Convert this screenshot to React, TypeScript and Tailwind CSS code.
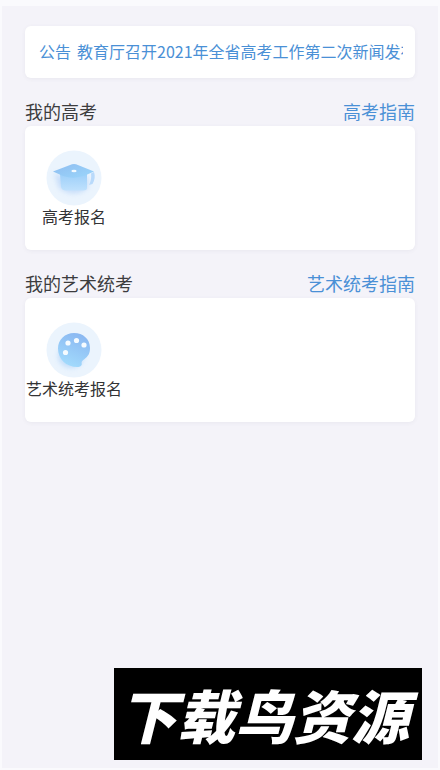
import type { ReactNode } from 'react';

function GraduationCapIcon() {
  return (
    <svg viewBox="0 0 56 56" className="h-14 w-14" aria-hidden="true">
      <defs>
        <linearGradient id="capTop" x1="0" y1="0" x2="1" y2="1">
          <stop offset="0" stopColor="#8fbdf0" />
          <stop offset="1" stopColor="#9bd6fb" />
        </linearGradient>
        <linearGradient id="capBase" x1="0" y1="0" x2="0" y2="1">
          <stop offset="0" stopColor="#9dcff9" />
          <stop offset="1" stopColor="#bfe1fd" />
        </linearGradient>
        <filter id="capBlur" x="-50%" y="-50%" width="200%" height="200%">
          <feGaussianBlur stdDeviation="2.5" />
        </filter>
      </defs>
      <circle cx="28" cy="28" r="27.5" fill="#ebf4fd" />
      <path d="M8 23 L28 30 L42 26 L42 38 Q28 49 13 38 Z" fill="#b0cff7" opacity="0.6" filter="url(#capBlur)" />
      <path d="M14 24 H41 V38 Q41 40.500 37 40.500 H20 Q16 40.500 15 37 Z" fill="url(#capBase)" />
      <path d="M7 21.500 L26 14.300 Q28 13.600 30 14.300 L48 21.500 L39 25.500 Q28 29.500 17 26 Z" fill="url(#capTop)" />
      <path d="M48 22 Q50 28 46.500 34 L43 35 Q46 29 45 23.500 Z" fill="#b9dafb" />
      <ellipse cx="28" cy="21" rx="2.600" ry="1.300" fill="#f3faff" />
    </svg>
  );
}

function PaletteIcon() {
  return (
    <svg viewBox="0 0 56 56" className="h-14 w-14" aria-hidden="true">
      <defs>
        <linearGradient id="palette" x1="0.7" y1="0" x2="0.3" y2="1">
          <stop offset="0" stopColor="#8ab7f1" />
          <stop offset="1" stopColor="#a3dcfd" />
        </linearGradient>
        <filter id="paletteBlur" x="-50%" y="-50%" width="200%" height="200%">
          <feGaussianBlur stdDeviation="2.5" />
        </filter>
      </defs>
      <circle cx="28" cy="28" r="27.5" fill="#ebf4fd" />
      <ellipse cx="25" cy="34" rx="13" ry="12" fill="#b5d5f9" opacity="0.7" filter="url(#paletteBlur)" />
      <path
        d="M28 11 C37 11 44 17 44 26 C44 31.500 42 34.500 38.500 37 C36 38.800 35.300 40 35.700 41.500 C36.200 43.800 34 45 31.500 45 C20 45 12 37 12 26.500 C12 17.500 19 11 28 11 Z"
        fill="url(#palette)"
      />
      <circle cx="22" cy="21" r="2.600" fill="#f5fbff" />
      <circle cx="30.500" cy="18.500" r="2.600" fill="#f5fbff" />
      <circle cx="38" cy="23" r="2.600" fill="#f5fbff" />
      <circle cx="19.500" cy="30.500" r="2.600" fill="#f5fbff" />
    </svg>
  );
}

const sections = [
  { title: '我的高考', guide: '高考指南', entry: '高考报名', icon: <GraduationCapIcon /> },
  { title: '我的艺术统考', guide: '艺术统考指南', entry: '艺术统考报名', icon: <PaletteIcon /> },
];

type SectionProps = {
  title: string;
  guide: string;
  entry: string;
  icon: ReactNode;
};

function Section({ title, guide, entry, icon }: SectionProps) {
  return (
    <section className="mt-5">
      <div className="flex items-center justify-between pb-[2px] text-[18px] leading-[26px]">
        <h2 className="text-[#3c3c3e]">{title}</h2>
        <a href="#" className="text-[#4a90d6]">
          {guide}
        </a>
      </div>
      <div className="rounded-md bg-white py-6 shadow-[0_1px_4px_rgba(80,80,120,0.07)]">
        <button type="button" className="flex w-[98px] flex-col items-center">
          {icon}
          <span className="text-base leading-5 whitespace-nowrap text-[#333335]">{entry}</span>
        </button>
      </div>
    </section>
  );
}

export default function App() {
  return (
    <div className="flex min-h-screen flex-col border-x-2 border-t-6 border-b-2 border-[#fafafd] bg-[#f4f3f9] font-['Noto_Sans_CJK_SC',sans-serif]">
      <main className="flex-1 px-[23px] pt-5">
        <a
          href="#"
          className="flex items-center gap-[6px] rounded-md bg-white pt-[13px] pr-3 pb-[15px] pl-[14px] text-base text-[#4a90d6] shadow-[0_1px_4px_rgba(80,80,120,0.07)]"
        >
          <span className="shrink-0">公告</span>
          <span className="flex-1 overflow-hidden whitespace-nowrap">教育厅召开2021年全省高考工作第二次新闻发布会</span>
        </a>
        {sections.map((section) => (
          <Section key={section.title} {...section} />
        ))}
      </main>

      <footer className="mt-6 mr-4 mb-2 flex h-[92px] w-[308px] items-center justify-center self-end bg-black pr-2">
        <p className="text-[58px] leading-[88px] font-black whitespace-nowrap text-white italic">下载鸟资源</p>
      </footer>
    </div>
  );
}
